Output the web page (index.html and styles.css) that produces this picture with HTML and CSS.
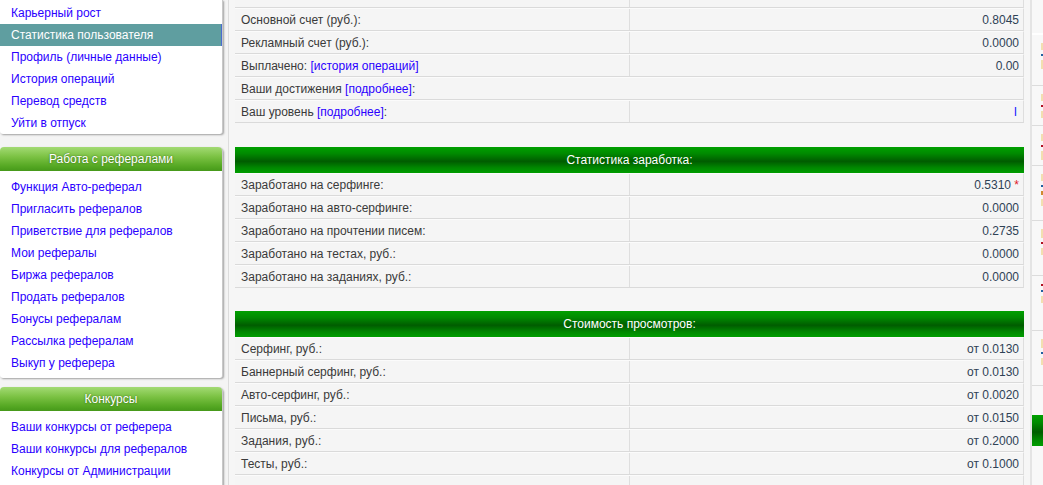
FILE: index.html
```html
<!DOCTYPE html>
<html lang="ru">
<head>
<meta charset="utf-8">
<title>Статистика пользователя</title>
<link rel="stylesheet" href="styles.css">
</head>
<body>
<div class="page">
  <aside class="sidebar">
    <div class="panel panel-top">
      <a class="item">Карьерный рост</a>
      <a class="item active">Статистика пользователя</a>
      <a class="item">Профиль (личные данные)</a>
      <a class="item">История операций</a>
      <a class="item">Перевод средств</a>
      <a class="item">Уйти в отпуск</a>
    </div>
    <div class="panel panel-ref">
      <div class="phead">Работа с рефералами</div>
      <div class="items">
        <a class="item">Функция Авто-реферал</a>
        <a class="item">Пригласить рефералов</a>
        <a class="item">Приветствие для рефералов</a>
        <a class="item">Мои рефералы</a>
        <a class="item">Биржа рефералов</a>
        <a class="item">Продать рефералов</a>
        <a class="item">Бонусы рефералам</a>
        <a class="item">Рассылка рефералам</a>
        <a class="item">Выкуп у реферера</a>
      </div>
    </div>
    <div class="panel panel-konk">
      <div class="phead">Конкурсы</div>
      <div class="items">
        <a class="item">Ваши конкурсы от реферера</a>
        <a class="item">Ваши конкурсы для рефералов</a>
        <a class="item">Конкурсы от Администрации</a>
      </div>
    </div>
  </aside>

  <main class="main">
    <div class="tbl">
      <div class="row partial"><div class="c1"></div><div class="c2"></div></div>
      <div class="row"><div class="c1">Основной счет (руб.):</div><div class="c2">0.8045</div></div>
      <div class="row"><div class="c1">Рекламный счет (руб.):</div><div class="c2">0.0000</div></div>
      <div class="row"><div class="c1">Выплачено: <a class="lnk">[история операций]</a></div><div class="c2">0.00</div></div>
      <div class="row"><div class="c1 span">Ваши достижения <a class="lnk">[подробнее]</a>:</div></div>
      <div class="row"><div class="c1">Ваш уровень <a class="lnk">[подробнее]</a>:</div><div class="c2"><span class="lvl">I</span></div></div>

      <div class="spacer first"></div>
      <div class="ghead">Статистика заработка:</div>
      <div class="row"><div class="c1">Заработано на серфинге:</div><div class="c2">0.5310 <span class="star">*</span></div></div>
      <div class="row"><div class="c1">Заработано на авто-серфинге:</div><div class="c2">0.0000</div></div>
      <div class="row"><div class="c1">Заработано на прочтении писем:</div><div class="c2">0.2735</div></div>
      <div class="row"><div class="c1">Заработано на тестах, руб.:</div><div class="c2">0.0000</div></div>
      <div class="row"><div class="c1">Заработано на заданиях, руб.:</div><div class="c2">0.0000</div></div>

      <div class="spacer"></div>
      <div class="ghead">Стоимость просмотров:</div>
      <div class="row"><div class="c1">Серфинг, руб.:</div><div class="c2">от 0.0130</div></div>
      <div class="row"><div class="c1">Баннерный серфинг, руб.:</div><div class="c2">от 0.0130</div></div>
      <div class="row"><div class="c1">Авто-серфинг, руб.:</div><div class="c2">от 0.0020</div></div>
      <div class="row"><div class="c1">Письма, руб.:</div><div class="c2">от 0.0150</div></div>
      <div class="row"><div class="c1">Задания, руб.:</div><div class="c2">от 0.2000</div></div>
      <div class="row"><div class="c1">Тесты, руб.:</div><div class="c2">от 0.1000</div></div>
      <div class="row"><div class="c1"></div><div class="c2"></div></div>
    </div>
  </main>

  <div class="rbar"></div>
  <div class="strip">
    <div class="seg s0"></div>
    <div class="seg s1"><i class="m y"></i><i class="m b"></i><i class="m y tall"></i></div>
    <div class="seg s2"><i class="m y"></i><i class="m r"></i><i class="m y"></i></div>
    <div class="seg s3"><i class="m y"></i><i class="m r"></i><i class="m y tall"></i></div>
    <div class="seg s4"><i class="m y"></i><i class="m b"></i><i class="m o"></i><i class="m y"></i></div>
    <div class="seg s5"><i class="m y tall"></i><i class="m r"></i><i class="m y"></i></div>
    <div class="seg s6"><i class="m r"></i><i class="m b"></i><i class="m y"></i></div>
    <div class="seg s7"><i class="m y tall"></i><i class="m b"></i><i class="m y"></i></div>
    <div class="seg s8"></div>
    <div class="sgreen"></div>
  </div>
</div>
</body>
</html>
```

FILE: styles.css
```css
* { box-sizing: border-box; }

html, body {
  margin: 0;
  padding: 0;
  height: 485px;
  overflow: hidden;
  background: #f4f4f4;
  font-family: "Liberation Sans", Arial, sans-serif;
  font-size: 12px;
}

.page {
  display: flex;
  align-items: flex-start;
  height: 485px;
}

/* ---------- sidebar ---------- */
.sidebar {
  width: 228px;
  flex: 0 0 228px;
  display: flex;
  flex-direction: column;
}

.panel {
  width: 223px;
  background: #fff;
  border-right: 1px solid #c8c8c8;
  box-shadow: 1px 1px 2px rgba(0,0,0,0.35);
  border-radius: 0 0 3px 3px;
}

.panel-top { padding: 2px 0 0 0; }
.panel-ref { margin-top: 13px; border-radius: 5px 5px 3px 3px; }
.panel-konk { margin-top: 9px; border-radius: 5px 5px 3px 3px; }

.phead {
  height: 24px;
  line-height: 24px;
  text-align: center;
  color: #fff;
  font-size: 12px;
  text-shadow: 0 0 2px rgba(40,90,10,0.9);
  background: linear-gradient(to bottom, #a3da74 0%, #7cc244 40%, #55a823 80%, #46991a 100%);
  border-radius: 4px 4px 0 0;
}

.items { padding: 5px 0 4px 0; }
.panel-konk .items { padding-bottom: 8px; }

.item {
  display: block;
  height: 22px;
  line-height: 22px;
  padding-left: 11px;
  color: #2a00ff;
  text-decoration: none;
  white-space: nowrap;
}

.item.active {
  background: #5f9ea0;
  color: #fff;
  border-right: 1px solid #4a6cd0;
}

/* ---------- main ---------- */
.main {
  width: 802px;
  flex: 0 0 802px;
  height: 485px;
  border-left: 1px solid #dcdcdc;
  background: #f6f6f6;
  padding: 0 6px;
}

.tbl {
  width: 789px;
  display: flex;
  flex-direction: column;
}

.row {
  display: flex;
  height: 23px;
  border-bottom: 1px solid #dadada;
  border-top: 1px solid #fbfbfb;
  border-right: 1px solid #dedede;
  background: #f5f5f5;
  color: #3a3a3a;
}

.row.partial { height: 8px; border-top: 0; }

.c1 {
  width: 395px;
  flex: 0 0 395px;
  padding-left: 6px;
  line-height: 22px;
  border-right: 1px solid #dedede;
  white-space: nowrap;
}

.c1.span { flex: 1 1 auto; border-right: 0; }

.c2 {
  flex: 1 1 auto;
  text-align: right;
  padding-right: 4px;
  line-height: 22px;
  color: #2f4256;
  white-space: nowrap;
}

.lnk { color: #2a00ff; text-decoration: none; }
.lvl { color: #1a1aff; font-size: 12px; padding-right: 2px; }
.star { color: #e0202a; }

.spacer { height: 23px; }
.spacer.first { height: 24px; }

.ghead {
  height: 26px;
  line-height: 27px;
  text-align: center;
  color: #fff;
  background: linear-gradient(to bottom, #00a000 0%, #008a00 25%, #005c00 55%, #008800 80%, #009e00 100%);
}

/* ---------- right edge ---------- */
.rbar {
  width: 2px;
  flex: 0 0 2px;
  height: 485px;
  background: #e4e4e4;
}

.strip {
  width: 11px;
  flex: 0 0 11px;
  height: 485px;
  background: #f8f8f8;
  display: flex;
  flex-direction: column;
}

.seg {
  border-bottom: 1px solid #dcdcdc;
  padding: 8px 0 0 9px;
  display: flex;
  flex-direction: column;
  gap: 4px;
}

.s0 { height: 35px; border-bottom: 2px solid #ffffff; }
.s1 { height: 51px; }
.s2 { height: 40px; }
.s3 { height: 40px; }
.s4 { height: 55px; }
.s5 { height: 55px; }
.s6 { height: 55px; }
.s7 { height: 55px; }
.s8 { height: 29px; border-bottom: 0; }

.m { display: block; width: 2px; height: 2px; }
.m.y { background: #f2dfb0; height: 7px; }
.m.y.tall { height: 9px; }
.m.r { background: #b01020; }
.m.b { background: #2060a0; }
.m.o { background: #d08a30; height: 4px; }

.sgreen {
  height: 31px;
  background: linear-gradient(to bottom, #00a000 0%, #008a00 25%, #005c00 55%, #008800 80%, #009e00 100%);
}
```
